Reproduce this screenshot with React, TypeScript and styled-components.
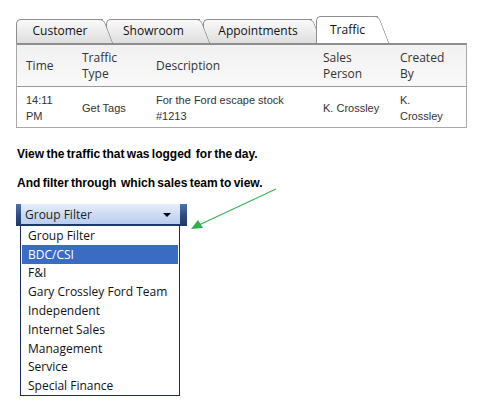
import React from "react";
import styled, { createGlobalStyle } from "styled-components";

const GlobalStyle = createGlobalStyle`
  html, body { margin: 0; padding: 0; background: #ffffff; }
  body { font-family: "Liberation Sans", Arial, sans-serif; color: #000; }
`;

const Page = styled.div`
  position: relative;
  width: 477px;
  height: 407px;
  box-sizing: border-box;
  padding: 16px 0 0 16px;
  overflow: hidden;
`;

const TabStrip = styled.div`
  display: flex;
  align-items: flex-end;
  height: 27px;
`;

const Tab = styled.div<{ $active?: boolean; $w: number; $gap: number; $z: number }>`
  position: relative;
  z-index: ${(p) => p.$z};
  width: ${(p) => p.$w}px;
  height: ${(p) => (p.$active ? 27 : 24)}px;
  margin-right: ${(p) => p.$gap}px;
  box-sizing: border-box;
  border: 1px solid #8e8e8e;
  border-right: none;
  border-bottom: none;
  border-radius: 5px 0 0 0;
  background: ${(p) => (p.$active ? "#ffffff" : "linear-gradient(#fafafa, #dedede)")};
  display: flex;
  align-items: center;
  justify-content: center;
  padding-bottom: 2px;
  font-family: "Open Sans", "Noto Sans", sans-serif;
  font-size: 12px;
  color: #111;

  &::after {
    content: "";
    position: absolute;
    top: -1px;
    right: -1px;
    width: 10px;
    height: calc(100% + 1px);
    box-sizing: border-box;
    border-top: 1px solid #8e8e8e;
    border-right: 1px solid #8e8e8e;
    border-top-right-radius: 5px;
    background: inherit;
    transform: skewX(21deg);
    transform-origin: top left;
    z-index: -1;
  }
`;

const Table = styled.div`
  width: 451px;
  box-sizing: border-box;
  border: 1px solid #a8a8a8;
  border-top: 2px solid #8e8e8e;
  display: grid;
  grid-template-columns: 56px 74px 167px 77px 1fr;
`;

const HeadCell = styled.div`
  height: 42px;
  box-sizing: border-box;
  padding-left: 9px;
  display: flex;
  align-items: center;
  background: linear-gradient(#f1f1f1, #f9f9f9);
  border-bottom: 1px solid #9a9a9a;
  font-family: "Open Sans", "Noto Sans", sans-serif;
  font-size: 12px;
  line-height: 16px;
  color: #333;
`;

const DataCell = styled.div`
  height: 40px;
  box-sizing: border-box;
  padding-left: 9px;
  padding-top: 2px;
  display: flex;
  align-items: center;
  font-family: "Liberation Sans", Arial, sans-serif;
  font-size: 11px;
  line-height: 16px;
  color: #333;
`;

const Note = styled.p<{ $top: number }>`
  margin: ${(p) => p.$top}px 0 0 1px;
  font-family: "Liberation Sans", Arial, sans-serif;
  font-weight: bold;
  font-size: 12px;
  line-height: 15px;
  word-spacing: -1px;
  white-space: pre;
  color: #000;
`;

const SelectWrap = styled.div`
  margin-top: 13px;
  width: 171px;
  display: flex;
  flex-direction: column;
`;

const SelectBar = styled.div`
  display: flex;
  height: 22px;
`;

const BarEnd = styled.div<{ $w: number }>`
  width: ${(p) => p.$w}px;
  background: linear-gradient(#4f72ad, #2c4a82 55%, #1f3868);
`;

const BarBody = styled.div`
  flex: 1;
  display: flex;
  align-items: center;
  justify-content: space-between;
  padding: 0 9px 0 4px;
  background: linear-gradient(#e7eefa, #c9d9f3 60%, #b9cdef);
  border-bottom: 2px solid #1c3670;
  font-family: "Open Sans", "Noto Sans", sans-serif;
  font-size: 12px;
  color: #1e1e1e;
`;

const Caret = styled.span`
  width: 0;
  height: 0;
  border-left: 4px solid transparent;
  border-right: 4px solid transparent;
  border-top: 4px solid #000;
  margin-top: 1px;
`;

const List = styled.div`
  margin-left: 4px;
  width: 160px;
  box-sizing: border-box;
  border: 1px solid #1d2b66;
  border-top: none;
  background: #fff;
  padding: 0 1px;
`;

const Item = styled.div<{ $selected?: boolean }>`
  height: 18.8px;
  display: flex;
  align-items: center;
  padding-left: 6px;
  background: ${(p) => (p.$selected ? "#3a6cc3" : "transparent")};
  color: ${(p) => (p.$selected ? "#ffffff" : "#111")};
  font-family: "Open Sans", "Noto Sans", sans-serif;
  font-size: 12px;
`;

const Pointer = styled.svg`
  position: absolute;
  left: 0;
  top: 0;
  pointer-events: none;
`;

const tabs = [
  { label: "Customer", w: 87, gap: 3, z: 4 },
  { label: "Showroom", w: 94, gap: 3, z: 3 },
  { label: "Appointments", w: 109, gap: 4, z: 2 },
  { label: "Traffic", w: 62, gap: 0, z: 5, active: true },
];

const heads: React.ReactNode[] = [
  "Time",
  <>Traffic<br />Type</>,
  "Description",
  <>Sales<br />Person</>,
  <>Created<br />By</>,
];

const row: React.ReactNode[] = [
  <>14:11<br />PM</>,
  "Get Tags",
  <>For the Ford escape stock<br />#1213</>,
  "K. Crossley",
  <>K.<br />Crossley</>,
];

const groups = [
  "Group Filter",
  "BDC/CSI",
  "F&I",
  "Gary Crossley Ford Team",
  "Independent",
  "Internet Sales",
  "Management",
  "Service",
  "Special Finance",
];

export default function App() {
  return (
    <>
      <GlobalStyle />
      <Page>
        <TabStrip>
          {tabs.map((t) => (
            <Tab key={t.label} $w={t.w} $gap={t.gap} $z={t.z} $active={t.active}>
              {t.label}
            </Tab>
          ))}
        </TabStrip>
        <Table>
          {heads.map((h, i) => (
            <HeadCell key={`h${i}`}>
              <span>{h}</span>
            </HeadCell>
          ))}
          {row.map((c, i) => (
            <DataCell key={`d${i}`}>
              <span>{c}</span>
            </DataCell>
          ))}
        </Table>
        <Note $top={19}>View the traffic that was logged  for the day.</Note>
        <Note $top={14}>And filter through  which sales team to view.</Note>
        <SelectWrap>
          <SelectBar>
            <BarEnd $w={5} />
            <BarBody>
              <span>Group Filter</span>
              <Caret />
            </BarBody>
            <BarEnd $w={7} />
          </SelectBar>
          <List>
            {groups.map((g, i) => (
              <Item key={g} $selected={i === 1}>
                {g}
              </Item>
            ))}
          </List>
        </SelectWrap>
        <Pointer width="477" height="407" viewBox="0 0 477 407">
          <line x1="276" y1="189" x2="199" y2="225" stroke="#3cb25a" strokeWidth="1.2" />
          <polygon points="191,229 198,220 203,228" fill="#2fb04f" />
        </Pointer>
      </Page>
    </>
  );
}
